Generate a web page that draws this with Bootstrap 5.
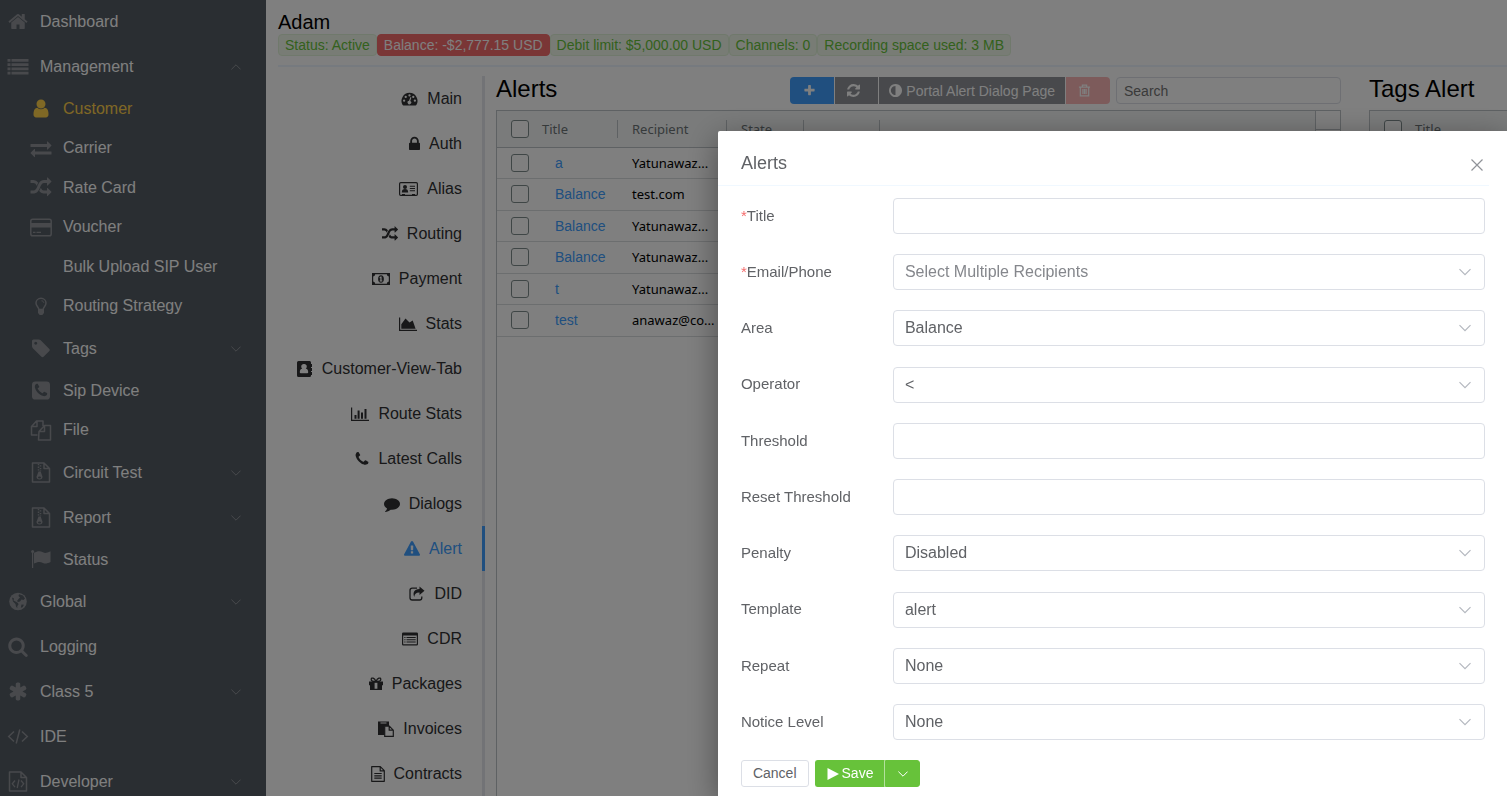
<!DOCTYPE html>
<html lang="en">
<head>
<meta charset="utf-8">
<meta name="viewport" content="width=device-width, initial-scale=1">
<title>Adam - Alerts</title>
<link rel="stylesheet" href="https://cdn.jsdelivr.net/npm/bootstrap@5.3.0/dist/css/bootstrap.min.css">
<style>
  body { font-family: "Liberation Sans", Arial, sans-serif; font-size: 16px; color: #000; }
  a { text-decoration: none; }
  svg { fill: currentColor; flex: none; }
  .ln { fill: none; stroke: currentColor; }

  /* sidebar */
  .side { flex: 0 0 266px; background: #545c64; }
  .side ul { margin-top: -1px; }
  .side a { color: #fff; height: 45px; padding-left: 6px; padding-right: 25px; }
  .side .ico { width: 24px; height: 21px; margin-right: 10px; color: #909399; }
  .side .sub a { padding-left: 29px; height: 100%; }
  .side .sub.tall { height: 45px; }
  .side .chev { width: 10px; height: 6px; color: #909399; }
  .grp6 { height: 237px; }
  .grp2 { height: 79px; }
  .grp1 { height: 39px; }
  .side .current a, .side .current .ico { color: #ffd04b; }

  /* page header */
  .page { padding-left: 12px; }
  .who { font-size: 20px; line-height: 24px; padding-top: 10px; }
  .tag-item { font-size: 14px; line-height: 20px; padding: 0 6px; border: 1px solid #e1f3d8; border-radius: 4px; background: #f0f9eb; color: #67c23a; }
  .tag-item.low { background: #f56c6c; border-color: #f56c6c; color: #fff; }
  .rule { height: 2px; background: #ecf5ff; margin: 9px 0; }

  /* vertical tabs */
  .tabs { flex: 0 0 207px; }
  .tabs a { height: 45px; padding-right: 20px; color: #303133; border-right: 3px solid #e4e7ed; font-size: 16px; }
  .tabs a.on { color: #409eff; border-color: #409eff; }
  .tabs svg { height: 16px; margin-right: 9px; }

  /* panels */
  .panel { margin-left: 11px; }
  .panel-tags { flex: 0 0 138px; margin-left: 28px; }
  .bar { height: 27px; margin-top: 1px; margin-bottom: 6px; }
  .bar h2 { font-size: 24px; line-height: 24px; }
  .tool { border: 0; border-right: 1px solid #fff; border-radius: 0; color: #fff; font-size: 14px; line-height: 26px; padding: 0 10px; height: 27px; background: #909399; }
  .tool svg { width: 13px; height: 13px; }
  .tool.icn { width: 44px; padding: 0; padding-right: 6px; }
  .tool.add { width: 45px; background: #409eff; border-radius: 4px 0 0 4px; }
  .tool.del { background: #fab6b6; border: 0; border-radius: 0 4px 4px 0; padding-right: 8px; }
  .find { width: 225px; height: 27px; font-size: 14px; padding: 0 7px; border: 1px solid #dcdfe6; border-radius: 4px; margin-left: 6px; background: #fff; }
  .find::placeholder { color: #757575; opacity: 1; }
  .sheet { border: 1px solid #bdc3c7; border-bottom: 0; }
  .grid-data { width: 100%; table-layout: fixed; font: 13px "Noto Sans", sans-serif; border-collapse: collapse; }
  .grid-data th { height: 36px; background: #f5f7f7; font-weight: 400; color: #6d7477; border-bottom: 1px solid #bdc3c7; padding: 0; }
  .grid-data th.cut > div { border-right: 1px solid #bdc3c7; height: 18px; line-height: 18px; }
  .grid-data th.void { background: #fff; border-left: 1px solid #bdc3c7; border-bottom: 0; vertical-align: top; }
  .void > div { height: 19px; border-bottom: 1px solid #bdc3c7; }
  .grid-data td { height: 31px; padding: 0; border-bottom: 1px solid #d9dcde; white-space: nowrap; }
  .grid-data tr:nth-child(even) td { height: 32px; }
  .grid-data td a { font: 14px "Liberation Sans", Arial, sans-serif; color: #409eff; margin-left: 13px; }
  .grid-data .rec { padding-left: 14px; }
  .tick { appearance: none; display: block; width: 18px; height: 18px; margin: 0 0 0 14px; border: 1px solid #7f8c8d; border-radius: 3px; background: #fff; }

  /* dialog */
  .veil { background: rgba(0,0,0,.5); padding-top: 131px; z-index: 10; overflow: hidden; }
  .dlg { width: 52.36%; background: #fff; color: #606266; box-shadow: 0 8px 32px rgba(0,0,0,.4); border-top-left-radius: 2px; padding-left: 23px; }
  .dlg-head { height: 55px; margin-left: -23px; padding: 8px 5px 0 23px; margin-right: 18px; border-bottom: 1px solid #f0f8ff; }
  .dlg-head h1 { font-size: 18px; line-height: 24px; padding-top: 12px; margin: 0; }
  .shut { border: 0; background: none; padding: 0; color: #909399; width: 14px; height: 14px; line-height: 0; margin-top: 19px; }
  .fields { height: 542px; margin: 12px 22px 20px 0; }
  .fields .fl { flex: 0 0 152px; font-size: 15px; }
  .fields i { color: #f56c6c; font-style: normal; }
  .fields .box { height: 36px; padding: 0 11px; font-size: 16px; line-height: 34px; color: #606266; border: 1px solid #dcdfe6; border-radius: 4px; }
  .fields select.box { padding-right: 32px; background: #fff url("data:image/svg+xml,%3Csvg xmlns='http://www.w3.org/2000/svg' viewBox='0 0 12 8'%3E%3Cpath d='M.5 1.2 6 6.7l5.5-5.500' fill='none' stroke='%23b4b8bf' stroke-width='1.200'/%3E%3C/svg%3E") no-repeat right 13px center / 12px 8px; }
  .fields select.hint { color: #85878c; }
  .act { height: 27px; line-height: 25px; font-size: 14px; padding: 0 11px; border: 1px solid #dcdfe6; border-radius: 3px; background: #fff; color: #606266; }
  .act.go { background: #67c23a; border-color: #67c23a; color: #fff; }
  .act svg { width: 12px; height: 12px; }
  .act.first { margin-left: 6px; border-radius: 3px 0 0 3px; border-right-color: #b3e19d; }
  .act.first svg { margin-right: 3px; }
  .act.more { width: 35px; padding: 0; border-radius: 0 3px 3px 0; }
  .act.more svg { width: 10px; }
</style>
</head>
<body>
<svg class="d-none" xmlns="http://www.w3.org/2000/svg">
  <symbol id="home" viewBox="0 0 1792 1792"><path d="M1472 992v480q0 26-19 45t-45 19h-384v-384h-256v384h-384q-26 0-45-19t-19-45v-480q0-1 .5-3t.5-3l575-474 575 474q1 2 1 6zm223-69l-62 74q-8 9-21 11h-3q-13 0-21-7l-692-577-692 577q-12 8-24 7-13-2-21-11l-62-74q-8-10-7-23.500t11-21.500l719-599q32-26 76-26t76 26l244 204v-195q0-14 9-23t23-9h192q14 0 23 9t9 23v408l219 182q10 8 11 21.500t-7 23.500z"/></symbol>
  <symbol id="list" viewBox="0 0 1792 1792"><path d="M0 256h256v230H0zM340 256h1452v230H340zM0 620h256v230H0zM340 620h1452v230H340zM0 984h256v230H0zM340 984h1452v230H340zM0 1348h256v230H0zM340 1348h1452v230H340z"/></symbol>
  <symbol id="user" viewBox="0 0 1792 1792"><path d="M1536 1399q0 109-62.500 187t-150.500 78h-854q-88 0-150.500-78t-62.500-187q0-85 8.500-160.500t31.500-152 58.500-131 94-89 134.500-34.500q131 128 313 128t313-128q76 0 134.500 34.500t94 89 58.500 131 31.500 152 8.500 160.500zm-256-887q0 159-112.500 271.500t-271.500 112.500-271.500-112.500-112.500-271.500 112.500-271.500 271.500-112.500 271.500 112.500 112.500 271.500z"/></symbol>
  <symbol id="swap" viewBox="0 0 1792 1792"><path d="M1792 1184v192q0 13-9.500 22.500t-22.500 9.500h-1376v192q0 13-9.500 22.500t-22.500 9.500q-12 0-24-10l-319-320q-9-9-9-22 0-14 9-23l320-320q9-9 23-9 13 0 22.500 9.500t9.500 22.500v192h1376q13 0 22.500 9.500t9.500 22.500zm0-544q0 14-9 23l-320 320q-9 9-23 9-13 0-22.500-9.500t-9.500-22.500v-192h-1376q-13 0-22.500-9.500t-9.500-22.500v-192q0-13 9.500-22.500t22.500-9.500h1376v-192q0-14 9-23t23-9q12 0 24 10l319 319q9 9 9 23z"/></symbol>
  <symbol id="random" viewBox="0 0 1792 1792"><path d="M666 481q-60 92-137 273-22-45-37-72.500t-40.500-63.500-51-56.500-63-35-81.500-14.500h-224q-14 0-23-9t-9-23v-192q0-14 9-23t23-9h224q250 0 410 225zm1126 799q0 14-9 23l-320 320q-9 9-23 9-13 0-22.500-9.500t-9.500-22.500v-192q-32 0-85 .5t-81 1-73-1-71-5-64-10.500-63-18.500-58-28.500-59-40-55-53.500-56-69.500q59-93 136-273 22 45 37 72.500t40.500 63.500 51 56.500 63 35 81.500 14.500h256v-192q0-14 9-23t23-9q12 0 24 10l319 319q9 9 9 23zm0-896q0 14-9 23l-320 320q-9 9-23 9-13 0-22.500-9.500t-9.500-22.500v-192h-256q-48 0-87 15t-69 45-51 61.500-45 77.500q-32 62-78 171-29 66-49.500 111t-54 105-64 100-74 83-90 68.500-106.500 42-128 16.500h-224q-14 0-23-9t-9-23v-192q0-14 9-23t23-9h224q48 0 87-15t69-45 51-61.500 45-77.500q32-62 78-171 29-66 49.500-111t54-105 64-100 74-83 90-68.500 106.500-42 128-16.500h256v-192q0-14 9-23t23-9q12 0 24 10l319 319q9 9 9 23z"/></symbol>
  <symbol id="credit" viewBox="-1 -1.500 24 21"><rect class="ln" x=".8" y=".8" width="20.400" height="16.400" rx="1.800" stroke-width="1.500"/><path d="M1 4.500h20V9H1zM3 13.200h2.500v1.300H3zM6.500 13.200h4.500v1.300H6.500z"/></symbol>
  <symbol id="bulb" viewBox="-1.500 -1.500 21 21"><path class="ln" stroke-width="1.500" d="M6.700 11.500C6.500 9.500 4 8.500 4 5.500A5 4.700 0 0 1 14 5.500C14 8.500 11.500 9.500 11.300 11.500"/><path class="ln" d="M9.500 3.300c1.200 0 2.200.8 2.300 2"/><path d="M6 11.200h6v4.300l-1.700 2.100H7.700L6 15.500z"/></symbol>
  <symbol id="tag" viewBox="0 0 1792 1792"><path d="M576 448q0-53-37.500-90.500t-90.500-37.500-90.500 37.500-37.500 90.500 37.500 90.500 90.500 37.500 90.500-37.500 37.500-90.500zm1067 576q0 53-37 90l-491 492q-39 37-91 37-53 0-90-37l-715-716q-38-37-64.500-101t-26.500-117v-416q0-52 38-90t90-38h416q53 0 117 26.500t102 64.500l715 714q37 39 37 91z"/></symbol>
  <symbol id="phone" viewBox="128 128 1536 1536"><path d="M1600 1240q0 27-10 70.500t-21 68.500q-21 50-122 106-94 51-186 51-27 0-53-3.500t-57.500-12.500-47-14.500-55.500-20.500-49-18q-98-35-175-83-127-79-264-216t-216-264q-48-77-83-175-3-9-18-49t-20.500-55.500-14.500-47-12.500-57.500-3.500-53q0-92 51-186 56-101 106-122 25-11 68.500-21t70.500-10q14 0 21 3 18 6 53 76 11 19 30 54t35 63.500 31 53.500q3 4 17.500 25t21.500 35.500 7 28.500q0 20-28.500 50t-62 55-62 53-28.500 46q0 9 5 22.500t8.500 20.500 14 24 11.500 19q76 137 174 235t235 174q2 1 19 11.500t24 14 20.500 8.500 22.500 5q18 0 46-28.500t53-62 55-62 50-28.500q14 0 28.500 7t35.500 21.500 25 17.500q25 15 53.500 31t63.500 35 54 30q70 35 76 53 3 7 3 21z"/></symbol>
  <symbol id="phonebox" viewBox="0 0 1792 1792"><rect x="128" y="128" width="1536" height="1536" rx="288"/><g fill="#545c64" transform="translate(224 224) scale(.75)"><path d="M1600 1240q0 27-10 70.500t-21 68.500q-21 50-122 106-94 51-186 51-27 0-53-3.500t-57.500-12.500-47-14.500-55.500-20.500-49-18q-98-35-175-83-127-79-264-216t-216-264q-48-77-83-175-3-9-18-49t-20.500-55.500-14.500-47-12.500-57.500-3.500-53q0-92 51-186 56-101 106-122 25-11 68.500-21t70.500-10q14 0 21 3 18 6 53 76 11 19 30 54t35 63.500 31 53.500q3 4 17.500 25t21.500 35.500 7 28.500q0 20-28.500 50t-62 55-62 53-28.500 46q0 9 5 22.500t8.500 20.500 14 24 11.500 19q76 137 174 235t235 174q2 1 19 11.500t24 14 20.500 8.500 22.500 5q18 0 46-28.500t53-62 55-62 50-28.500q14 0 28.500 7t35.500 21.500 25 17.500q25 15 53.500 31t63.500 35 54 30q70 35 76 53 3 7 3 21z"/></g></symbol>
  <symbol id="copy" viewBox="0 0 21 21"><path class="ln" stroke-width="1.500" stroke-linejoin="round" d="M7 15H1V6.500L6 1h6.500v5M6.500 1v5.500H1M8 20h12V5.500h-6L8.500 11.500 8 20zM14 5.500v6H8.500"/></symbol>
  <symbol id="zip" viewBox="0 0 19 21"><path class="ln" stroke-width="1.500" stroke-linejoin="round" d="M1 1h11.500L18 6.500V20H1zM12.500 1v5.500H18"/><path class="ln" stroke-width="1.500" stroke-dasharray="1.300 1.300" d="M7 2v7M9 3.300v6"/><path d="M7 9.500h2.200l1.800 5.200a3 2.700 0 1 1-6 0z"/><ellipse cx="8" cy="15.500" rx="1.500" ry="1" fill="#545c64"/></symbol>
  <symbol id="flag" viewBox="-.5 -1 21 21"><path d="M1 1.200h1.200V18H1zM3 2.800c3.500-2 6-2.200 9-.5 2 1.200 4 .7 7.500-1V12c-3 1.500-5.500 2-7.500.9-3-1.500-5.500-1.300-9 .7z"/><circle cx="1.600" cy="1.400" r="1.500"/></symbol>
  <symbol id="globe" viewBox="-1.500 -1.500 21 21"><circle cx="9" cy="9" r="8.800"/><path fill="#545c64" d="M10 1.800l4 1.200 2 3-1.500 1.500-2-.5-1.500 2-2 .5L8 8.500l1.500-2L11 5 9.500 3.500zM12.500 12l2.500.3-1.500 2.400-1.700.5zM3 5l2 1-.5 2L6.500 9l2.500 1.500.5 1.500-1.200 1.500v2.300L7 14l-.5-2.500L4 9z"/></symbol>
  <symbol id="search" viewBox="0 0 1792 1792"><path d="M1216 832q0-185-131.500-316.500t-316.500-131.500-316.500 131.500-131.500 316.500 131.500 316.500 316.500 131.500 316.500-131.500 131.500-316.500zm512 832q0 52-38 90t-90 38q-54 0-90-38l-343-342q-179 124-399 124-143 0-273.500-55.500t-225-150-150-225-55.500-273.500 55.500-273.500 150-225 225-150 273.500-55.500 273.500 55.500 225 150 150 225 55.500 273.500q0 220-124 399l343 343q37 37 37 90z"/></symbol>
  <symbol id="star" viewBox="0 0 1792 1792"><path d="M1546 1050q46 26 59.500 77.500t-12.500 97.500l-64 110q-26 46-77.500 59.500t-97.500-12.500l-266-153v307q0 52-38 90t-90 38h-128q-52 0-90-38t-38-90v-307l-266 153q-46 26-97.500 12.500t-77.500-59.500l-64-110q-26-46-12.500-97.500t59.500-77.500l266-154-266-154q-46-26-59.500-77.500t12.500-97.500l64-110q26-46 77.500-59.500t97.500 12.500l266 153v-307q0-52 38-90t90-38h128q52 0 90 38t38 90v307l266-153q46-26 97.500-12.500t77.500 59.500l64 110q26 46 12.500 97.500t-59.500 77.500l-266 154z"/></symbol>
  <symbol id="code" viewBox="-1.500 -2.500 24 21"><path class="ln" stroke-width="1.500" d="M6.500 3L1.200 8l5.300 5M14.500 3l5.300 5-5.300 5M12.300 1L8.700 15"/></symbol>
  <symbol id="codefile" viewBox="0 0 19 21"><path class="ln" stroke-width="1.500" stroke-linejoin="round" d="M1 1h11.500L18 6.500V20H1zM12.500 1v5.500H18"/><path class="ln" stroke-width="1.300" d="M6.500 9.500l-2.700 3.300 2.700 3.300M12.500 9.500l2.700 3.300-2.700 3.300M10.500 8.500l-1.800 8.500"/></symbol>
  <symbol id="down" viewBox="0 0 10 6"><path class="ln" stroke-width="1" d="M.4.6L5 5.200 9.600.6"/></symbol>
  <symbol id="up" viewBox="0 0 10 6"><path class="ln" stroke-width="1" d="M.4 5.400L5 .8l4.600 4.600"/></symbol>
  <symbol id="dash" viewBox="0 0 18 16"><path fill-rule="evenodd" d="M9 1.500a8.500 8.500 0 0 1 7.300 12.800l-.8.500h-13l-.8-.5A8.500 8.500 0 0 1 9 1.500zM9 3a1.200 1.200 0 1 0 0 2.400A1.200 1.200 0 0 0 9 3zM5 4.600A1.200 1.200 0 1 0 5 7a1.200 1.200 0 0 0 0-2.400zM13 4.600A1.200 1.200 0 1 0 13 7a1.200 1.200 0 0 0 0-2.400zM3.300 8.600a1.200 1.200 0 1 0 0 2.400 1.200 1.200 0 0 0 0-2.400zM14.700 8.600a1.200 1.200 0 1 0 0 2.400 1.200 1.200 0 0 0 0-2.400zM10 6L8.500 9.800A1.900 1.900 0 1 0 9.800 10L11 6.300z"/></symbol>
  <symbol id="lock" viewBox="320 128 1152 1536"><path d="M640 768h512v-192q0-106-75-181t-181-75-181 75-75 181v192zm832 96v576q0 40-28 68t-68 28h-960q-40 0-68-28t-28-68v-576q0-40 28-68t68-28h32v-192q0-184 132-316t316-132 316 132 132 316v192h32q40 0 68 28t28 68z"/></symbol>
  <symbol id="idcard" viewBox="0 0 19 16"><rect class="ln" x=".6" y="1.600" width="17.800" height="12.800" rx="1.200" stroke-width="1.200"/><circle cx="6" cy="6" r="2"/><path d="M2.800 11.500c0-2.500 1-3.500 3.200-3.500s3.200 1 3.200 3.500zM10.800 4.800H16v1h-5.200zM10.800 7H16v1h-5.200zM10.800 9.200H16v1h-5.200zM3 13h3v2H3zM13 13h3v2h-3z"/></symbol>
  <symbol id="money" viewBox="0 0 18 16"><path fill-rule="evenodd" d="M0 2h18v12H0zM3.200 3.300A2.300 2.300 0 0 1 1.200 5.500v5a2.300 2.300 0 0 1 2 2.200h11.600a2.300 2.300 0 0 1 2-2.200v-5a2.300 2.300 0 0 1-2-2.200zM9 4.200c1.900 0 2.900 1.600 2.900 3.800S10.900 11.800 9 11.800 6.100 10.200 6.100 8 7.100 4.200 9 4.200z"/><path d="M8.600 5.500h1v4H8.300V7l-.7.200V6.200zM7.700 9.500h2.600v.9H7.700z" fill="#fff"/></symbol>
  <symbol id="area" viewBox="0 0 18 16"><path d="M0 1.500h1.200v12.300H18V15H0zM2.300 12.800V8.200L6.500 2.500l4 4 3.200-2L16.600 12.800z"/></symbol>
  <symbol id="book" viewBox="0 0 16 16"><path fill-rule="evenodd" d="M1.500 0h11.200Q14 0 14 1.500V3h1v3h-1v1h1v3h-1v1h1v3h-1v.5Q14 16 12.700 16H1.500Q0 16 0 14.500v-13Q0 0 1.500 0zM7 3a2.500 2.500 0 0 0-1.800 4.500C3.500 8 2.800 9.300 2.800 11.300q0 1 1 1h6.400q1 0 1-1c0-2-.7-3.300-2.400-3.800A2.500 2.500 0 0 0 7 3z"/></symbol>
  <symbol id="bars" viewBox="0 0 18 16"><path d="M0 1.500h1.200v12.300H18V15H0zM3.500 9h2v3.800h-2zM6.600 4.500h2v8.300h-2zM10 6.500h2v6.300h-2zM13.500 3h2v9.800h-2z"/></symbol>
  <symbol id="chat" viewBox="0 0 1792 1792"><path d="M1792 896q0 174-120 321.500t-326 233-450 85.500q-70 0-145-8-198 175-460 242-49 14-114 22-17 2-30.500-9t-17.500-29v-1q-3-4-.5-12t2-10 4.500-9.500l6-9 7-8.500 8-9q7-8 31-34.500t34.500-38 31-39.500 32.500-51 27-59 26-76q-157-89-247.500-220t-90.500-281q0-130 71-248.500t191-204.500 286-136.500 348-50.500 348 50.500 286 136.500 191 204.500 71 248.500z"/></symbol>
  <symbol id="warn" viewBox="0 0 1792 1792"><path d="M1024 1375v-190q0-14-9.500-23.500t-22.500-9.500h-192q-13 0-22.500 9.500t-9.500 23.500v190q0 14 9.500 23.500t22.500 9.500h192q13 0 22.500-9.500t9.500-23.500zm-2-374l18-459q0-12-10-19-13-11-24-11h-220q-11 0-24 11-10 7-10 21l17 457q0 10 10 16.500t24 6.500h185q14 0 23.500-6.500t10.500-16.500zm-14-934l768 1408q35 63-2 126-17 29-46.500 46t-63.500 17h-1536q-34 0-63.500-17t-46.500-46q-37-63-2-126l768-1408q17-31 47-49t65-18 65 18 47 49z"/></symbol>
  <symbol id="share" viewBox="0 0 16 16"><path class="ln" stroke-width="1.300" d="M8 2.200H3.200Q1 2.200 1 4.400v7.400Q1 14 3.200 14h7.400q2.200 0 2.200-2.200V10.500"/><path d="M10.500.5L15.500 4.700l-5 4.300V6.500C7 6.400 5.500 8 5.300 11 3.500 7 5 3 10.500 3z"/></symbol>
  <symbol id="cdr" viewBox="0 0 16 16"><path fill-rule="evenodd" d="M1.300 1.500h13.400Q16 1.500 16 2.800v10.400q0 1.300-1.300 1.300H1.300Q0 14.500 0 13.200V2.800Q0 1.500 1.300 1.500zM1.200 4.600v8.700h13.600V4.600zM2.300 6h1.200v1H2.300zM4.500 6h9.200v1H4.500zM2.300 8.300h1.200v1H2.300zM4.500 8.300h9.200v1H4.500zM2.300 10.600h1.200v1H2.300zM4.500 10.600h9.200v1H4.500z"/></symbol>
  <symbol id="gift" viewBox="0 0 14 16"><path fill-rule="evenodd" d="M0 5.500h14v3.800h-1V14H1V9.300H0zM5.600 6.800v5.900h2.800V6.800z"/><path class="ln" stroke-width="1.300" d="M7 5.500C5.500 2 2.500 1 2.200 3.300 2 5 4 5.500 7 5.500zM7 5.500C8.500 2 11.500 1 11.800 3.300 12 5 10 5.500 7 5.500z"/></symbol>
  <symbol id="paste" viewBox="0 0 16 16"><path d="M0 .5h11V5H6.500v9H0z"/><path class="ln" stroke-width="1.200" d="M6.700 5.200h4.600l4 4v6.200H6.700zM11.200 5.200v4h4"/><path fill="#fff" d="M2.500 1.500h6v1h-6z"/></symbol>
  <symbol id="doc" viewBox="0 0 14 16"><path class="ln" stroke-width="1.200" stroke-linejoin="round" d="M.7.700h8.600l4 4v10.600H.7zM9.200.7v4.200h4.100M3.300 7.500h7.400M3.300 9.800h7.400M3.300 12.100h7.400"/></symbol>
  <symbol id="plus" viewBox="0 0 1792 1792"><path d="M1600 736v192q0 40-28 68t-68 28h-416v416q0 40-28 68t-68 28h-192q-40 0-68-28t-28-68v-416h-416q-40 0-68-28t-28-68v-192q0-40 28-68t68-28h416v-416q0-40 28-68t68-28h192q40 0 68 28t28 68v416h416q40 0 68 28t28 68z"/></symbol>
  <symbol id="refresh" viewBox="128 128 1536 1536"><path d="M1639 1056q0 5-1 7-64 268-268 434.500t-478 166.500q-146 0-282.500-55t-243.500-157l-129 129q-19 19-45 19t-45-19-19-45v-448q0-26 19-45t45-19h448q26 0 45 19t19 45-19 45l-137 137q71 66 161 102t187 36q134 0 250-65t186-179q11-17 53-117 8-23 30-23h192q13 0 22.500 9.500t9.500 22.500zm25-800v448q0 26-19 45t-45 19h-448q-26 0-45-19t-19-45 19-45l138-138q-148-137-349-137-134 0-250 65t-186 179q-11 17-53 117-8 23-30 23h-199q-13 0-22.500-9.500t-9.500-22.500v-7q65-268 270-434.500t480-166.500q146 0 284 55.500t245 156.500l130-129q19-19 45-19t45 19 19 45z"/></symbol>
  <symbol id="half" viewBox="128 128 1536 1536"><path d="M896 1440v-1088q-148 0-273 73t-198 198-73 273 73 273 198 198 273 73zm768-544q0 209-103 385.500t-279.500 279.500-385.500 103-385.500-103-279.500-279.500-103-385.500 103-385.500 279.500-279.500 385.500-103 385.500 103 279.500 279.500 103 385.500z"/></symbol>
  <symbol id="trash" viewBox="0 0 14 14"><path class="ln" stroke-width="1.300" d="M1 3.400h12M4.700 3.200V1.200h4.600v2M2.500 3.500v9.300h9V3.500M5.300 5.500v5.300M7 5.500v5.300M8.700 5.500v5.300"/></symbol>
  <symbol id="play" viewBox="0 0 12 12"><path d="M.5 0L12 6 .5 12z"/></symbol>
  <symbol id="cross" viewBox="0 0 14 14"><path class="ln" stroke-width="1.200" d="M1.500 1.500l11 11M12.500 1.500l-11 11"/></symbol>
</svg>

<div class="d-flex vh-100 overflow-hidden">
  <nav class="side overflow-hidden" aria-label="Main menu">
    <ul class="list-unstyled mb-0">
      <li><a href="#" class="d-flex align-items-center"><svg class="ico"><use href="#home"/></svg>Dashboard</a></li>
      <li><a href="#" class="d-flex align-items-center"><svg class="ico"><use href="#list"/></svg>Management<svg class="chev ms-auto"><use href="#up"/></svg></a>
        <ul class="list-unstyled mt-0">
          <li class="grp6">
            <ul class="list-unstyled mt-0 d-flex flex-column h-100">
              <li class="sub flex-fill current"><a href="#" class="d-flex align-items-center"><svg class="ico"><use href="#user"/></svg>Customer</a></li>
              <li class="sub flex-fill"><a href="#" class="d-flex align-items-center"><svg class="ico"><use href="#swap"/></svg>Carrier</a></li>
              <li class="sub flex-fill"><a href="#" class="d-flex align-items-center"><svg class="ico"><use href="#random"/></svg>Rate Card</a></li>
              <li class="sub flex-fill"><a href="#" class="d-flex align-items-center"><svg class="ico"><use href="#credit"/></svg>Voucher</a></li>
              <li class="sub flex-fill"><a href="#" class="d-flex align-items-center"><svg class="ico"></svg>Bulk Upload SIP User</a></li>
              <li class="sub flex-fill"><a href="#" class="d-flex align-items-center"><svg class="ico"><use href="#bulb"/></svg>Routing Strategy</a></li>
            </ul>
          </li>
          <li class="sub tall"><a href="#" class="d-flex align-items-center"><svg class="ico"><use href="#tag"/></svg>Tags<svg class="chev ms-auto"><use href="#down"/></svg></a></li>
          <li class="grp2">
            <ul class="list-unstyled mt-0 d-flex flex-column h-100">
              <li class="sub flex-fill"><a href="#" class="d-flex align-items-center"><svg class="ico"><use href="#phonebox"/></svg>Sip Device</a></li>
              <li class="sub flex-fill"><a href="#" class="d-flex align-items-center"><svg class="ico"><use href="#copy"/></svg>File</a></li>
            </ul>
          </li>
          <li class="sub tall"><a href="#" class="d-flex align-items-center"><svg class="ico"><use href="#zip"/></svg>Circuit Test<svg class="chev ms-auto"><use href="#down"/></svg></a></li>
          <li class="sub tall"><a href="#" class="d-flex align-items-center"><svg class="ico"><use href="#zip"/></svg>Report<svg class="chev ms-auto"><use href="#down"/></svg></a></li>
          <li class="sub grp1"><a href="#" class="d-flex align-items-center"><svg class="ico"><use href="#flag"/></svg>Status</a></li>
        </ul>
      </li>
      <li><a href="#" class="d-flex align-items-center"><svg class="ico"><use href="#globe"/></svg>Global<svg class="chev ms-auto"><use href="#down"/></svg></a></li>
      <li><a href="#" class="d-flex align-items-center"><svg class="ico"><use href="#search"/></svg>Logging</a></li>
      <li><a href="#" class="d-flex align-items-center"><svg class="ico"><use href="#star"/></svg>Class 5<svg class="chev ms-auto"><use href="#down"/></svg></a></li>
      <li><a href="#" class="d-flex align-items-center"><svg class="ico"><use href="#code"/></svg>IDE</a></li>
      <li><a href="#" class="d-flex align-items-center"><svg class="ico"><use href="#codefile"/></svg>Developer<svg class="chev ms-auto"><use href="#down"/></svg></a></li>
    </ul>
  </nav>

  <main class="page flex-grow-1 d-flex flex-column overflow-hidden">
    <div class="who">Adam</div>
    <div class="d-flex">
      <span class="tag-item">Status: Active</span><span class="tag-item low">Balance: -$2,777.15 USD</span><span class="tag-item">Debit limit: $5,000.00 USD</span><span class="tag-item">Channels: 0</span><span class="tag-item">Recording space used: 3 MB</span>
    </div>
    <div class="rule flex-shrink-0"></div>
    <div class="d-flex flex-grow-1 overflow-hidden">
      <nav class="tabs" aria-label="Customer sections">
        <a href="#" class="d-flex align-items-center justify-content-end"><svg width="17"><use href="#dash"/></svg>Main</a>
        <a href="#" class="d-flex align-items-center justify-content-end"><svg width="11"><use href="#lock"/></svg>Auth</a>
        <a href="#" class="d-flex align-items-center justify-content-end"><svg width="19"><use href="#idcard"/></svg>Alias</a>
        <a href="#" class="d-flex align-items-center justify-content-end"><svg width="16"><use href="#random"/></svg>Routing</a>
        <a href="#" class="d-flex align-items-center justify-content-end"><svg width="18"><use href="#money"/></svg>Payment</a>
        <a href="#" class="d-flex align-items-center justify-content-end"><svg width="18"><use href="#area"/></svg>Stats</a>
        <a href="#" class="d-flex align-items-center justify-content-end"><svg width="16"><use href="#book"/></svg>Customer-View-Tab</a>
        <a href="#" class="d-flex align-items-center justify-content-end"><svg width="18"><use href="#bars"/></svg>Route Stats</a>
        <a href="#" class="d-flex align-items-center justify-content-end"><svg width="14"><use href="#phone"/></svg>Latest Calls</a>
        <a href="#" class="d-flex align-items-center justify-content-end"><svg width="16"><use href="#chat"/></svg>Dialogs</a>
        <a href="#" class="on d-flex align-items-center justify-content-end"><svg width="16"><use href="#warn"/></svg>Alert</a>
        <a href="#" class="d-flex align-items-center justify-content-end"><svg width="16"><use href="#share"/></svg>DID</a>
        <a href="#" class="d-flex align-items-center justify-content-end"><svg width="16"><use href="#cdr"/></svg>CDR</a>
        <a href="#" class="d-flex align-items-center justify-content-end"><svg width="14"><use href="#gift"/></svg>Packages</a>
        <a href="#" class="d-flex align-items-center justify-content-end"><svg width="16"><use href="#paste"/></svg>Invoices</a>
        <a href="#" class="d-flex align-items-center justify-content-end"><svg width="14"><use href="#doc"/></svg>Contracts</a>
      </nav>

      <section class="panel flex-grow-1 d-flex flex-column">
        <div class="bar d-flex align-items-center flex-shrink-0">
          <h2 class="mb-0 me-auto align-self-start">Alerts</h2>
          <button type="button" class="tool add icn d-flex align-items-center justify-content-center" aria-label="Add"><svg><use href="#plus"/></svg></button>
          <button type="button" class="tool icn d-flex align-items-center justify-content-center" aria-label="Refresh"><svg><use href="#refresh"/></svg></button>
          <button type="button" class="tool d-flex align-items-center"><svg class="me-1"><use href="#half"/></svg>Portal Alert Dialog Page</button>
          <button type="button" class="tool del icn d-flex align-items-center justify-content-center" aria-label="Delete"><svg><use href="#trash"/></svg></button>
          <input type="search" class="find" placeholder="Search" aria-label="Search">
        </div>
        <div class="sheet flex-grow-1">
          <table class="grid-data">
            <colgroup><col style="width:45px"><col style="width:76px"><col style="width:109px"><col style="width:77px"><col style="width:76px"><col><col style="width:25px"></colgroup>
            <thead><tr>
              <th><input type="checkbox" class="tick" aria-label="Select all"></th>
              <th class="cut"><div>Title</div></th>
              <th class="cut"><div class="rec">Recipient</div></th>
              <th class="cut"><div class="rec">State</div></th>
              <th class="cut"><div></div></th>
              <th></th>
              <th class="void"><div></div></th>
            </tr></thead>
            <tbody>
              <tr><td><input type="checkbox" class="tick" aria-label="Select row"></td><td><a href="#">a</a></td><td class="rec">Yatunawaz...</td><td colspan="4"></td></tr>
              <tr><td><input type="checkbox" class="tick" aria-label="Select row"></td><td><a href="#">Balance</a></td><td class="rec">test.com</td><td colspan="4"></td></tr>
              <tr><td><input type="checkbox" class="tick" aria-label="Select row"></td><td><a href="#">Balance</a></td><td class="rec">Yatunawaz...</td><td colspan="4"></td></tr>
              <tr><td><input type="checkbox" class="tick" aria-label="Select row"></td><td><a href="#">Balance</a></td><td class="rec">Yatunawaz...</td><td colspan="4"></td></tr>
              <tr><td><input type="checkbox" class="tick" aria-label="Select row"></td><td><a href="#">t</a></td><td class="rec">Yatunawaz...</td><td colspan="4"></td></tr>
              <tr><td><input type="checkbox" class="tick" aria-label="Select row"></td><td><a href="#">test</a></td><td class="rec">anawaz@co...</td><td colspan="4"></td></tr>
            </tbody>
          </table>
        </div>
      </section>

      <section class="panel-tags d-flex flex-column">
        <div class="bar flex-shrink-0"><h2 class="mb-0">Tags Alert</h2></div>
        <div class="sheet border-end-0 flex-grow-1">
          <table class="grid-data">
            <colgroup><col style="width:45px"><col></colgroup>
            <thead><tr><th><input type="checkbox" class="tick" aria-label="Select all tags"></th><th>Title</th></tr></thead>
          </table>
        </div>
      </section>
    </div>
  </main>
</div>

<div class="veil position-fixed top-0 start-0 w-100 h-100 d-flex justify-content-end">
  <form class="dlg h-100" role="dialog" aria-labelledby="dlg-title">
    <div class="dlg-head d-flex justify-content-between align-items-start">
      <h1 id="dlg-title" class="fw-normal">Alerts</h1>
      <button type="button" class="shut" aria-label="Close"><svg width="14" height="14"><use href="#cross"/></svg></button>
    </div>
    <div class="fields d-flex flex-column justify-content-between">
      <div class="d-flex align-items-center"><label class="fl" for="f1"><i>*</i>Title</label><input id="f1" type="text" class="form-control box"></div>
      <div class="d-flex align-items-center"><label class="fl" for="f2"><i>*</i>Email/Phone</label><select id="f2" class="form-select box hint"><option>Select Multiple Recipients</option></select></div>
      <div class="d-flex align-items-center"><label class="fl" for="f3">Area</label><select id="f3" class="form-select box"><option>Balance</option></select></div>
      <div class="d-flex align-items-center"><label class="fl" for="f4">Operator</label><select id="f4" class="form-select box"><option>&lt;</option></select></div>
      <div class="d-flex align-items-center"><label class="fl" for="f5">Threshold</label><input id="f5" type="text" class="form-control box"></div>
      <div class="d-flex align-items-center"><label class="fl" for="f6">Reset Threshold</label><input id="f6" type="text" class="form-control box"></div>
      <div class="d-flex align-items-center"><label class="fl" for="f7">Penalty</label><select id="f7" class="form-select box"><option>Disabled</option></select></div>
      <div class="d-flex align-items-center"><label class="fl" for="f8">Template</label><select id="f8" class="form-select box"><option>alert</option></select></div>
      <div class="d-flex align-items-center"><label class="fl" for="f9">Repeat</label><select id="f9" class="form-select box"><option>None</option></select></div>
      <div class="d-flex align-items-center"><label class="fl" for="f10">Notice Level</label><select id="f10" class="form-select box"><option>None</option></select></div>
    </div>
    <div class="d-flex">
      <button type="button" class="act">Cancel</button>
      <button type="submit" class="act go first d-flex align-items-center"><svg><use href="#play"/></svg>Save</button>
      <button type="button" class="act go more d-flex align-items-center justify-content-center" aria-label="More save options"><svg><use href="#down"/></svg></button>
    </div>
  </form>
</div>
<script src="https://cdn.jsdelivr.net/npm/bootstrap@5.3.0/dist/js/bootstrap.bundle.min.js"></script>
</body>
</html>
